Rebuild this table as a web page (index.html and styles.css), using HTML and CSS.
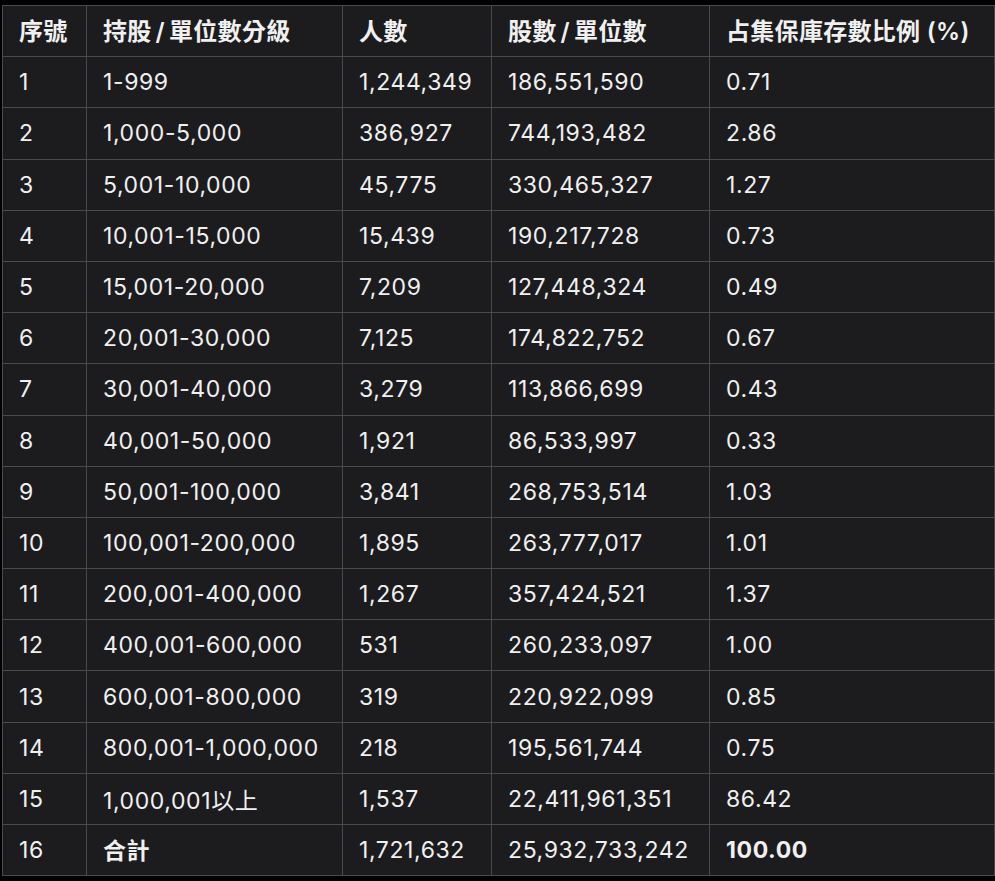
FILE: index.html
```html
<!DOCTYPE html>
<html lang="zh-Hant">
<head>
<meta charset="utf-8">
<title>持股分級表</title>
<link rel="stylesheet" href="styles.css">
</head>
<body>
<table class="dist">
  <colgroup>
    <col class="c1"><col class="c2"><col class="c3"><col class="c4"><col class="c5">
  </colgroup>
  <thead>
    <tr><th>序號</th><th>持股<span class="sl">/</span>單位數分級</th><th>人數</th><th>股數<span class="sl">/</span>單位數</th><th>占集保庫存數比例 (%)</th></tr>
  </thead>
  <tbody>
    <tr><td>1</td><td>1-999</td><td>1,244,349</td><td>186,551,590</td><td>0.71</td></tr>
    <tr><td>2</td><td>1,000-5,000</td><td>386,927</td><td>744,193,482</td><td>2.86</td></tr>
    <tr><td>3</td><td>5,001-10,000</td><td>45,775</td><td>330,465,327</td><td>1.27</td></tr>
    <tr><td>4</td><td>10,001-15,000</td><td>15,439</td><td>190,217,728</td><td>0.73</td></tr>
    <tr><td>5</td><td>15,001-20,000</td><td>7,209</td><td>127,448,324</td><td>0.49</td></tr>
    <tr><td>6</td><td>20,001-30,000</td><td>7,125</td><td>174,822,752</td><td>0.67</td></tr>
    <tr><td>7</td><td>30,001-40,000</td><td>3,279</td><td>113,866,699</td><td>0.43</td></tr>
    <tr><td>8</td><td>40,001-50,000</td><td>1,921</td><td>86,533,997</td><td>0.33</td></tr>
    <tr><td>9</td><td>50,001-100,000</td><td>3,841</td><td>268,753,514</td><td>1.03</td></tr>
    <tr><td>10</td><td>100,001-200,000</td><td>1,895</td><td>263,777,017</td><td>1.01</td></tr>
    <tr><td>11</td><td>200,001-400,000</td><td>1,267</td><td>357,424,521</td><td>1.37</td></tr>
    <tr><td>12</td><td>400,001-600,000</td><td>531</td><td>260,233,097</td><td>1.00</td></tr>
    <tr><td>13</td><td>600,001-800,000</td><td>319</td><td>220,922,099</td><td>0.85</td></tr>
    <tr><td>14</td><td>800,001-1,000,000</td><td>218</td><td>195,561,744</td><td>0.75</td></tr>
    <tr><td>15</td><td>1,000,001以上</td><td>1,537</td><td>22,411,961,351</td><td>86.42</td></tr>
    <tr><td>16</td><td class="strong cjk">合計</td><td>1,721,632</td><td>25,932,733,242</td><td class="strong">100.00</td></tr>
  </tbody>
</table>
</body>
</html>
```

FILE: styles.css
```css
html, body {
  margin: 0;
  background: #000;
}
body {
  padding: 5px 2px 0 2px;
  font-family: "Inter", "Noto Sans CJK TC", sans-serif;
  color: #f0f0f0;
}
.dist {
  border-collapse: collapse;
  table-layout: fixed;
  width: 992px;
  background: #1c1c1e;
  font-size: 23px;
  letter-spacing: 0.6px;
}
.c1 { width: 84px; }
.c2 { width: 256px; }
.c3 { width: 149px; }
.c4 { width: 218px; }
.c5 { width: 285px; }
.dist th, .dist td {
  border: 1px solid #4a4a4c;
  height: 51.2px;
  padding: 0 0 0 16px;
  text-align: left;
  vertical-align: middle;
  white-space: nowrap;
  box-sizing: border-box;
  font-weight: 400;
}
.dist th {
  font-weight: 600;
  font-size: 24px;
  letter-spacing: 0.3px;
  padding-bottom: 4px;
}
.dist .sl {
  margin: 0 4px;
}
.dist .strong {
  font-weight: 700;
}
.dist .cjk {
  padding-bottom: 3px;
}
```
